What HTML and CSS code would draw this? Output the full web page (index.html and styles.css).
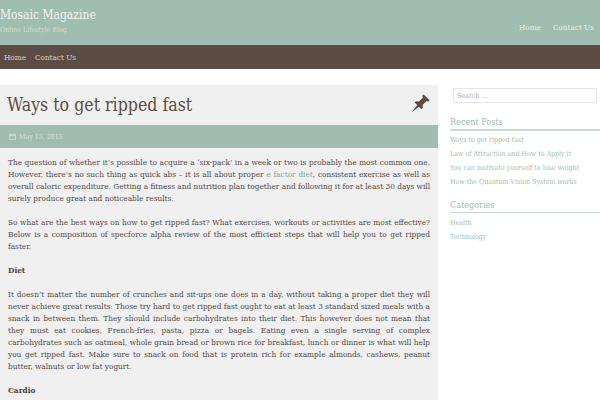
FILE: index.html
```html
<!DOCTYPE html>
<html lang="en">
<head>
<meta charset="utf-8">
<title>Ways to get ripped fast</title>
<link rel="stylesheet" href="styles.css">
</head>
<body>
<header class="masthead">
  <div class="brand">
    <div class="site-title">Mosaic Magazine</div>
    <div class="tagline">Online Lifestyle Blog</div>
  </div>
  <nav class="top-nav"><a>Home</a><a>Contact Us</a></nav>
</header>
<nav class="main-nav"><a>Home</a><a>Contact Us</a></nav>
<div class="page">
  <main class="article">
    <div class="title-band">
      <h1>Ways to get ripped fast</h1>
      <svg class="pin" viewBox="0 0 20 20" width="19" height="19" aria-hidden="true"><path d="M0.5 19.5 L6.6 11.6 L3.9 8.9 L5.3 7.6 L8.4 7.9 L12.4 3.9 L12 1.6 L13.3 0.4 L19.6 6.6 L18.4 7.9 L16.2 7.5 L12.2 11.6 L12.4 14.6 L11.1 16 L8.3 13.3 Z" fill="#5b4d43"/></svg>
    </div>
    <div class="date-band">
      <svg class="cal" viewBox="0 0 8 8" width="7" height="7" aria-hidden="true"><path d="M0.5 1.5H7.5V7.5H0.5Z M0.5 3H7.5" fill="none" stroke="#dbe6e1" stroke-width="0.8"/></svg>
      <span>May 15, 2015</span>
    </div>
    <div class="body">
      <p>The question of whether it’s possible to acquire a ‘six-pack’ in a week or two is probably the most common one. However, there’s no such thing as quick abs – it is all about proper <a>e factor diet</a>, consistent exercise as well as overall caloric expenditure. Getting a fitness and nutrition plan together and following it for at least 30 days will surely produce great and noticeable results.</p>
      <p>So what are the best ways on how to get ripped fast? What exercises, workouts or activities are most effective? Below is a composition of specforce alpha review of the most efficient steps that will help you to get ripped faster.</p>
      <p><strong>Diet</strong></p>
      <p>It doesn’t matter the number of crunches and sit-ups one does in a day, without taking a proper diet they will never achieve great results. Those try hard to get ripped fast ought to eat at least 3 standard sized meals with a snack in between them. They should include carbohydrates into their diet. This however does not mean that they must eat cookies, French-fries, pasta, pizza or bagels. Eating even a single serving of complex carbohydrates such as oatmeal, whole grain bread or brown rice for breakfast, lunch or dinner is what will help you get ripped fast. Make sure to snack on food that is protein rich for example almonds, cashews, peanut butter, walnuts or low fat yogurt.</p>
      <p><strong>Cardio</strong></p>
    </div>
  </main>
  <aside class="sidebar">
    <input class="search" type="text" placeholder="Search …">
    <h2 class="widget-title recent">Recent Posts</h2>
    <ul class="links">
      <li>Ways to get ripped fast</li>
      <li>Law of Attraction and How to Apply it</li>
      <li>You can motivate yourself to lose weight</li>
      <li>How the Quantum Vision System works</li>
    </ul>
    <h2 class="widget-title">Categories</h2>
    <ul class="links">
      <li>Health</li>
      <li>Technology</li>
    </ul>
  </aside>
</div>
</body>
</html>
```
FILE: styles.css
```css
* { box-sizing: border-box; }
html, body { margin: 0; height: 400px; overflow: hidden; }
body { background: #fff; font-family: "DejaVu Serif Condensed", "DejaVu Serif", serif; font-stretch: condensed; color: #5b4d43; }
.masthead { height: 45px; background: #9fbdb0; display: flex; justify-content: space-between; }
.site-title { color: #f1f5f3; font-size: 12px; line-height: 14px; margin-top: 8px; }
.tagline { color: #ccdcd5; font-size: 7px; line-height: 10px; margin-top: 3px; }
.top-nav { display: flex; gap: 12px; align-items: center; padding: 9px 6px 0 0; height: 45px; }
.top-nav a { color: #e8efec; font-size: 8.1px; }
.main-nav { height: 24px; background: #5b4d43; display: flex; gap: 9px; align-items: center; padding-left: 4px; }
.main-nav a { color: #d9d4cf; font-size: 8.1px; }
.page { display: flex; padding-top: 16px; }
.article { width: 438px; background: #f0f0f0; flex: none; }
.title-band { height: 40px; display: flex; align-items: center; justify-content: space-between; padding: 0 8px 0 7px; }
h1 { font-weight: 400; font-size: 17.6px; margin: 0; color: #5b4d43; }
.pin { display: block; margin-bottom: 3px; }
.date-band { height: 23px; background: #9fbdb0; display: flex; align-items: center; gap: 3px; padding-left: 9px; color: #dbe6e1; font-size: 7px; }
.body { padding: 8px 8px 0; font-size: 8.2px; line-height: 12px; color: #4f4a46; text-align: justify; }
.body p { margin: 0 0 12px; }
.body a { color: #7fa898; }
.body strong { color: #4a3f37; }
.sidebar { flex: 1; padding: 3px 0 0 12px; min-width: 0; }
.search { display: block; width: 144px; height: 15px; margin-left: 3px; padding: 0 3px; border: 1px solid #e3e7e5; border-radius: 2px; background: #fff; font: 7px "DejaVu Serif Condensed", serif; }
.search::placeholder { color: #a9a9a9; opacity: 1; }
.widget-title { font-weight: 400; font-size: 9px; line-height: 14px; margin: 0; padding-bottom: 0; border-bottom: 1px solid #c9dad2; color: #9fbdb0; }
.recent { margin-top: 12px; border-bottom-width: 2px; }
.links { list-style: none; margin: 3px 0 8px; padding: 0; color: #9fbdb0; font-size: 7px; line-height: 14px; }
.recent + .links { margin-top: 2px; margin-bottom: 9px; }
```
